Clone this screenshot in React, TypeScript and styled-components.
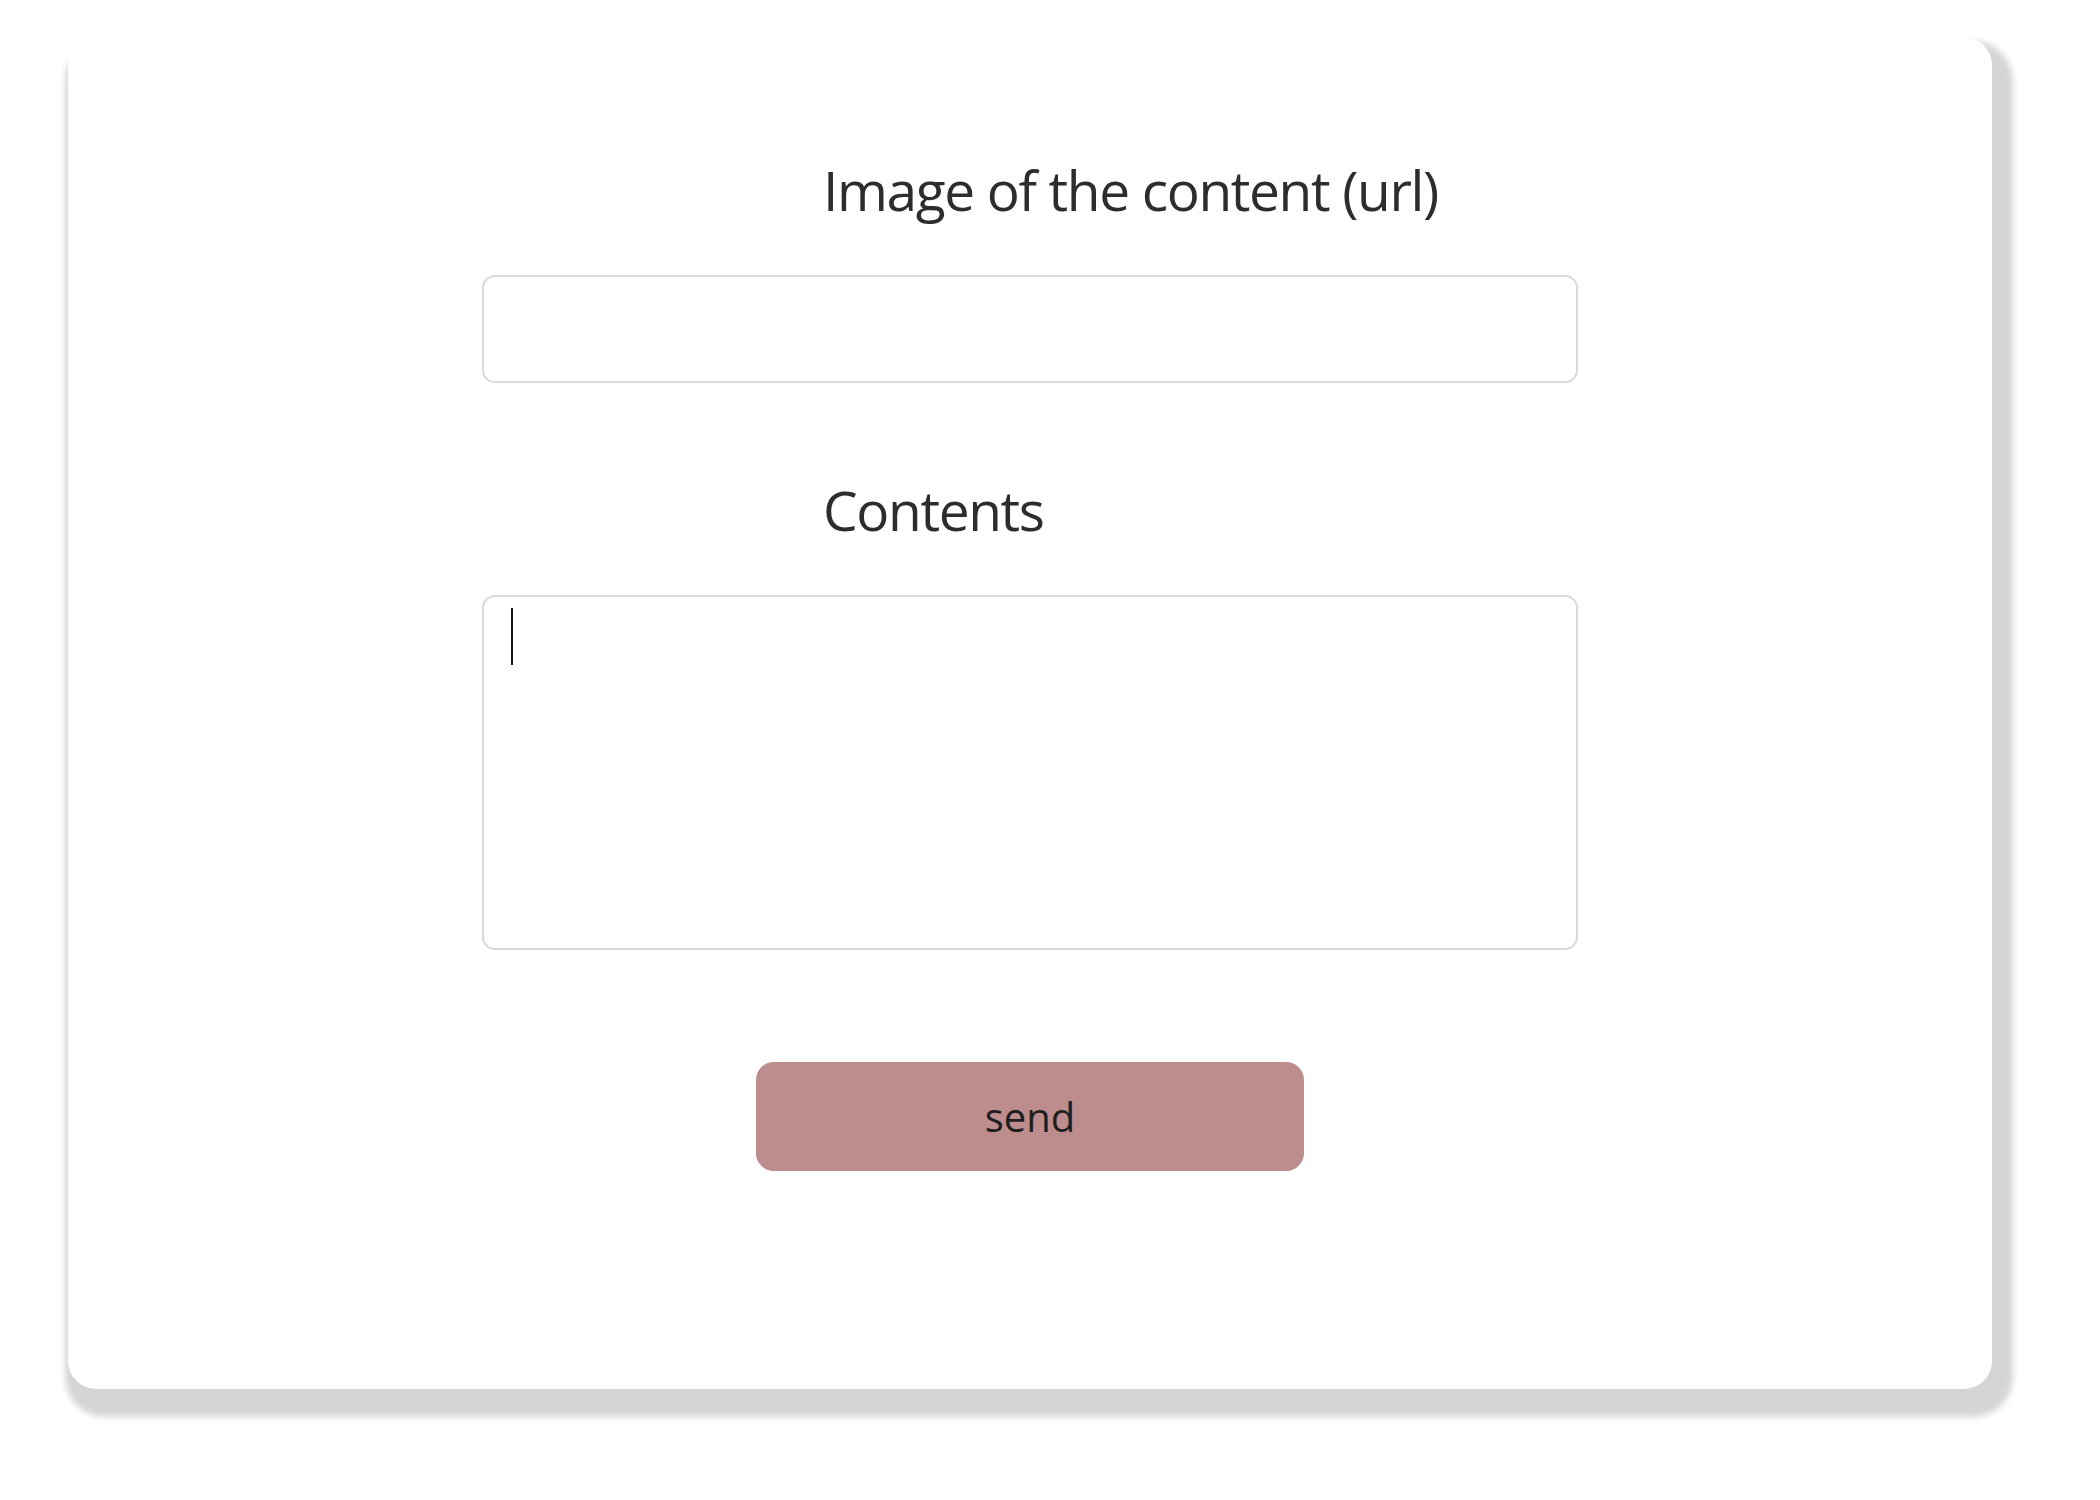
import React from 'react';
import styled, {createGlobalStyle} from "styled-components";

const GlobalStyle = createGlobalStyle`
  body {
    margin: 0;
    background: #ffffff;
    font-family: "Open Sans", "Noto Sans", sans-serif;
  }
`

const Page = styled.div`
  padding: 37px 0 0 68px;
  min-height: 1500px;
  box-sizing: border-box;
`

const Card = styled.div`
  width: 1924px;
  height: 1352px;
  box-sizing: border-box;
  padding-top: 120px;
  background: #ffffff;
  border-radius: 28px;
  box-shadow: 9px 16px 6px 12px rgba(0, 0, 0, 0.17);
  display: flex;
  flex-direction: column;
  align-items: center;
`

const Form = styled.form`
  width: 1096px;
  display: flex;
  flex-direction: column;
`

const Label = styled.label<{ $gap: number }>`
  display: block;
  padding-left: 341px;
  margin-bottom: ${p => p.$gap}px;
  font-size: 55px;
  line-height: 66px;
  letter-spacing: -1.35px;
  color: #2d2d2d;
`

const Field = styled.input`
  height: 108px;
  box-sizing: border-box;
  border: 2px solid #d9d9d9;
  border-radius: 13px;
  padding: 0 28px;
  font: inherit;
  font-size: 42px;
  outline: none;
  margin-bottom: 94px;
`

const AreaWrap = styled.div`
  position: relative;
`

const Area = styled.textarea`
  display: block;
  width: 100%;
  height: 355px;
  box-sizing: border-box;
  border: 2px solid #d9d9d9;
  border-radius: 13px;
  padding: 12px 28px;
  font: inherit;
  font-size: 42px;
  resize: none;
  outline: none;
`

// the text caret of the focused box
const Caret = styled.span`
  position: absolute;
  left: 29px;
  top: 13px;
  width: 2px;
  height: 57px;
  background: #1a1a1a;
`

const SendButton = styled.button`
  align-self: center;
  margin-top: 112px;
  width: 548px;
  height: 109px;
  border: none;
  border-radius: 18px;
  background: #bd8c8c;
  color: #1e1e1e;
  font-family: inherit;
  font-size: 40px;
  cursor: pointer;
`

const App = () => {
    return (
        <Page>
            <GlobalStyle/>
            <Card>
                <Form onSubmit={e => e.preventDefault()}>
                    <Label $gap={52} htmlFor="image">Image of the content (url)</Label>
                    <Field id="image" type="text"/>
                    <Label $gap={52} htmlFor="contents">Contents</Label>
                    <AreaWrap>
                        <Area id="contents"/>
                        <Caret/>
                    </AreaWrap>
                    <SendButton type="submit">send</SendButton>
                </Form>
            </Card>
        </Page>
    );
};

export default App;
